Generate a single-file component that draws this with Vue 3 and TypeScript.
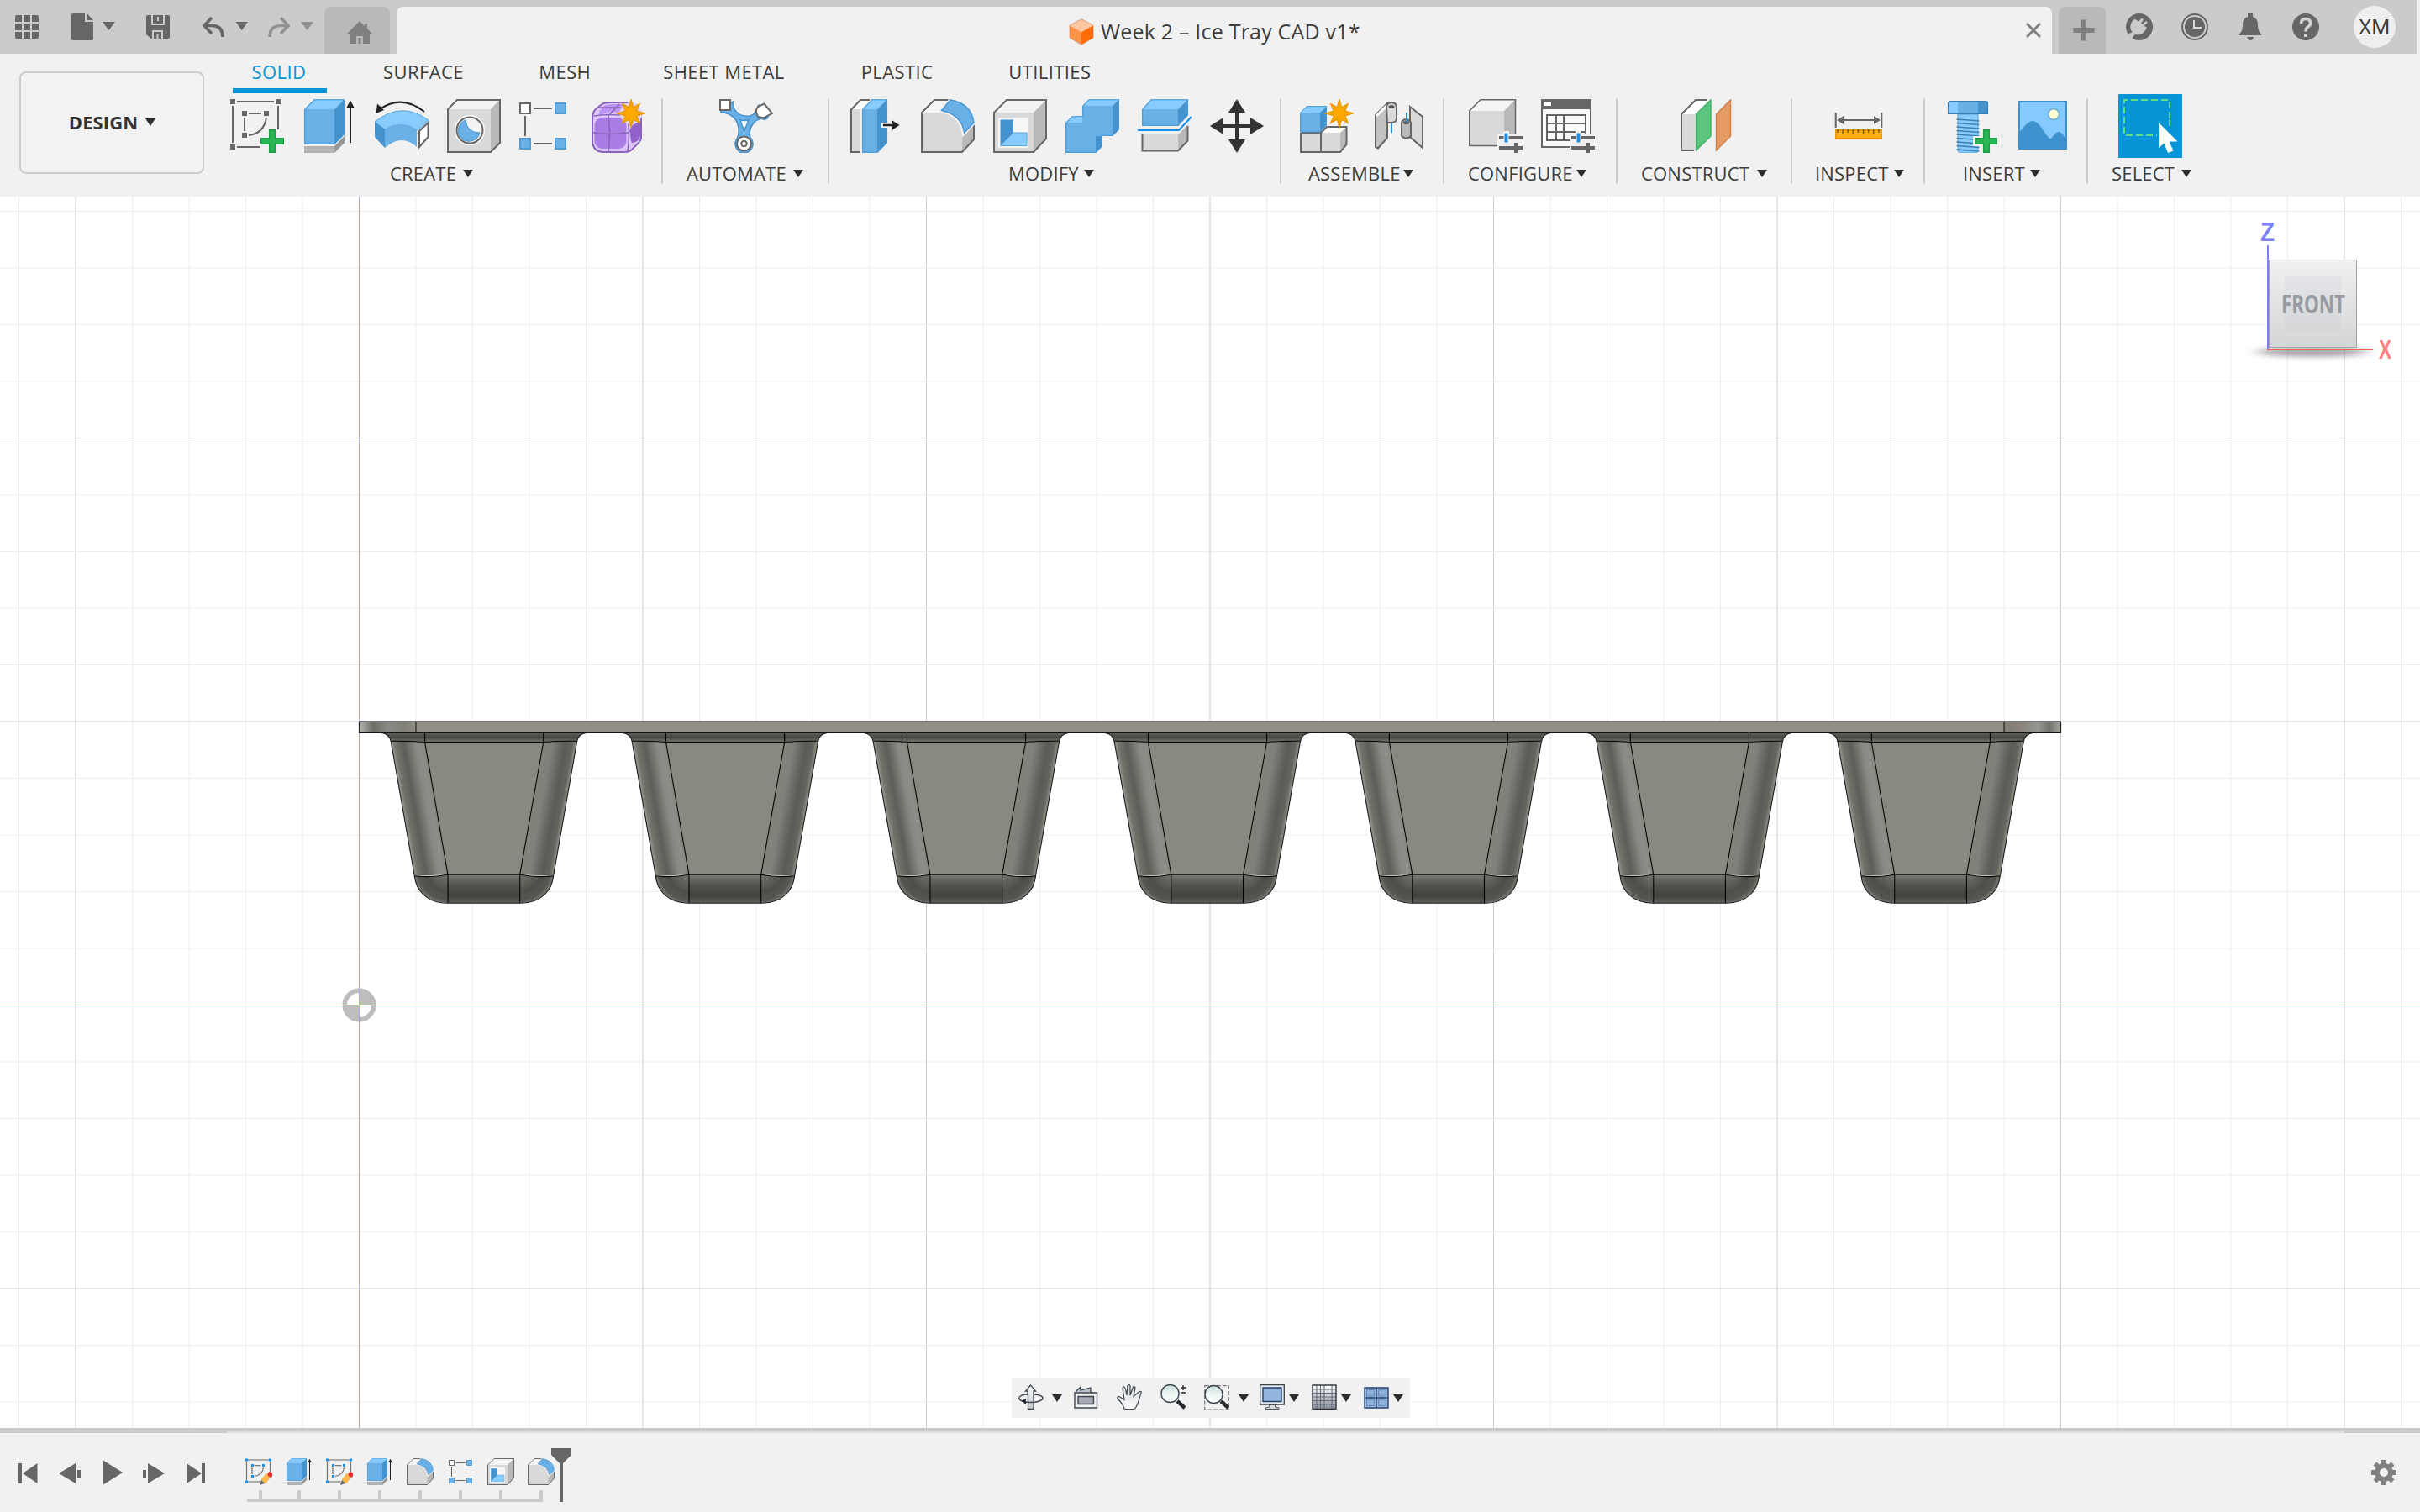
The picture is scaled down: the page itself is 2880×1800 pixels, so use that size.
<script setup lang="ts">
interface ToolGroup {
  label: string
  width: number
  pad: number
  labelX: number
  textWidth: number
  icons: string[]
}

const tabs = [
  { name: 'SOLID', gap: 0 },
  { name: 'SURFACE', gap: 92 },
  { name: 'MESH', gap: 89.5 },
  { name: 'SHEET METAL', gap: 86 },
  { name: 'PLASTIC', gap: 91 },
  { name: 'UTILITIES', gap: 90 },
]

const groups: ToolGroup[] = [
  { label: 'CREATE', width: 533, pad: 1, labelX: 210, textWidth: 87, icons: ['sketch', 'extrude', 'revolve', 'hole', 'pattern', 'form'] },
  { label: 'AUTOMATE', width: 196, pad: 2, labelX: 28, textWidth: 127, icons: ['automate'] },
  { label: 'MODIFY', width: 536, pad: 4, labelX: 213, textWidth: 90, icons: ['press', 'fillet', 'shell', 'combine', 'split', 'move'] },
  { label: 'ASSEMBLE', width: 192, pad: 2, labelX: 32, textWidth: 113, icons: ['component', 'joint'] },
  { label: 'CONFIGURE', width: 204, pad: 3, labelX: 28, textWidth: 129, icons: ['config', 'table'] },
  { label: 'CONSTRUCT', width: 206, pad: 2, labelX: 28, textWidth: 138, icons: ['plane'] },
  { label: 'INSPECT', width: 156, pad: 2, labelX: 27, textWidth: 94, icons: ['measure'] },
  { label: 'INSERT', width: 192, pad: 2, labelX: 45, textWidth: 80, icons: ['bolt', 'picture'] },
]

const navItems = [
  { icon: 'orbit', gap: 8 },
  { icon: 'caret', gap: 10 },
  { icon: 'look', gap: 14 },
  { icon: 'hand', gap: 21 },
  { icon: 'zoom', gap: 22 },
  { icon: 'fit', gap: 22 },
  { icon: 'caret', gap: 11 },
  { icon: 'display', gap: 13 },
  { icon: 'caret', gap: 5 },
  { icon: 'grid', gap: 15 },
  { icon: 'caret', gap: 5 },
  { icon: 'views', gap: 15 },
  { icon: 'caret', gap: 5 },
]

const timeline = ['sketch-edit', 'extrude', 'sketch-edit', 'extrude', 'fillet', 'pattern', 'shell', 'fillet']

const STEP = 67.5
const columns = Array.from({ length: 43 }, (_, i) => i - 6).map((i) => ({ at: 427.5 + i * STEP, major: i % 5 === 0 }))
const rows = Array.from({ length: 22 }, (_, i) => i - 14).map((i) => ({ at: 1196.5 + i * STEP, major: i % 5 === 0 }))
const cups = Array.from({ length: 7 }, (_, i) => i * 286.95)
const rulerTicks = Array.from({ length: 9 }, (_, i) => ({ x: 7 + i * 6.1, h: i % 2 ? 6 : 4 }))
const threads = Array.from({ length: 9 }, (_, i) => 24 + i * 4.5)
const gridSteps = [6, 10.5, 15, 19.5, 24]
</script>

<template>
  <div class="app">
    <svg class="defs" width="0" height="0">
      <defs>
        <linearGradient id="lens" x1="0" y1="0" x2="0" y2="1">
          <stop offset="0" stop-color="#c9dedc" /><stop offset=".5" stop-color="#ecf6f4" /><stop offset="1" stop-color="#fff" />
        </linearGradient>
        <linearGradient id="metal" x1="0" y1="0" x2="0" y2="1">
          <stop offset="0" stop-color="#fff" /><stop offset="1" stop-color="#c5c8d0" />
        </linearGradient>
        <linearGradient id="palm" x1="0" y1="0" x2="0" y2="1">
          <stop offset="0" stop-color="#d4d7dc" /><stop offset="1" stop-color="#fff" />
        </linearGradient>
        <linearGradient id="mesh" x1="0" y1="0" x2="0" y2="1">
          <stop offset="0" stop-color="#fff" /><stop offset="1" stop-color="#878c99" />
        </linearGradient>

        <g id="burst">
          <polygon points="0,-16 2.6,-7 10,-11 6.6,-2.8 16,0 6.6,2.8 10,11 2.6,7 0,16 -2.6,7 -10,11 -6.6,2.8 -16,0 -6.6,-2.8 -10,-11 -2.6,-7" fill="#ffa900" stroke="#e89a00" stroke-width="1.5" />
        </g>
        <g id="plus">
          <path d="M46 36h8v10h10v8h-10v10h-8v-10h-10v-8h10z" fill="none" stroke="#f1f1f1" stroke-width="4" />
          <path d="M46.7 36.7h6.6v10h10v6.6h-10v10h-6.6v-10h-10v-6.6h10z" fill="#29b556" stroke="#1a9f42" stroke-width="1.5" />
        </g>
        <g id="sliders">
          <path d="M34 42h7v-4h7v4h18v22h-6v2h-9v-2h-17z" fill="#f1f1f1" />
          <path d="M36 44h28v4h-28zM36 56h28v4h-28zM54 52h4v12h-4z" fill="#666" />
          <path d="M42 40h5v12h-5z" fill="#1790ec" stroke="#f1f1f1" stroke-width="1" />
        </g>

        <symbol id="i-sketch" viewBox="0 0 64 64">
          <path d="M8 3h44M3 8v44M57 8v28M8 57h28M22 17h15M17 22v16M43 22Q40 41 22 43" fill="none" stroke="#666" stroke-width="2" />
          <path d="M0 0h6v6H0zM54 0h6v6h-6zM0 54h6v6H0zM14 14h6v6h-6zM40 14h6v6h-6zM14 40h6v6h-6z" fill="#666" />
          <use href="#plus" />
        </symbol>
        <symbol id="i-sketch-edit" viewBox="0 0 64 64">
          <path d="M5 4h54M5 56h30" stroke="#aaa" stroke-width="4" /><path d="M3 8v44M59 8v28M21 17h16M16 22v16M43 22Q41 40 21 43" fill="none" stroke="#777" stroke-width="2.5" />
          <path d="M0 1h6v6H0zM56 1h6v6h-6zM0 53h6v6H0zM14 14h6v6h-6zM40 14h6v6h-6zM14 40h6v6h-6z" fill="#1790ec" />
          <path d="M34 64l4-13 8 9z" fill="#666" /><path d="M38 52l12-16 10 8-12 16z" fill="#fcbb4b" stroke="#d99a30" /><path d="M54 35l3-3 7 3v8l-4 3-7-5z" fill="#f03030" />
        </symbol>
        <symbol id="i-extrude" viewBox="0 0 64 64">
          <path d="M2 56h36v8H2z" fill="#b2b2b2" /><path d="M38 56l12-12v8L38 64z" fill="#979797" />
          <path d="M2 12h36v42H2z" fill="#69b0e6" /><path d="M2 12L14 0h36L38 12z" fill="#87cbff" /><path d="M38 12L50 0v42L38 54z" fill="#4492ce" />
          <path d="M2.7 53.3V12.3L14.3.7h35v41L38 53.3z" fill="none" stroke="#4a98d2" stroke-opacity=".7" stroke-width="1.5" />
          <path d="M57 8v44" stroke="#222" stroke-width="2" /><path d="M52.500 10L57 1.500 61.500 10z" fill="#222" />
        </symbol>
        <symbol id="i-revolve" viewBox="0 0 64 64">
          <path d="M0 27Q32 1.500 64 25L51 37Q32 24 12 36z" fill="#87cbff" stroke="#5ca6dc" />
          <path d="M12 36Q32 24 50 36V57Q32 40.500 12 58z" fill="#69b0e6" /><path d="M0 27L12 36V58L0 45z" fill="#4492ce" />
          <path d="M53 38L63.500 28V45L53 57z" fill="#fff" stroke="#666" stroke-width="2" />
          <path d="M59 15Q32 -6 6 12" fill="none" stroke="#222" stroke-width="2.200" /><path d="M1.500 17L3 5.500 11 13z" fill="#222" />
        </symbol>
        <symbol id="i-hole" viewBox="0 0 64 64">
          <path d="M1 12L12 1H63V52L52 63H1z" fill="#d9d9d9" /><path d="M1 12L12 1H63L52 12z" fill="#f3f3f3" /><path d="M52 12L63 1V52L52 63z" fill="#b9b9b9" />
          <path d="M1 12L12 1H63V52L52 63H1z" fill="none" stroke="#666" stroke-width="2" />
          <circle cx="27" cy="37" r="18" fill="#fff" /><circle cx="27" cy="37" r="15.500" fill="#f3f3f3" stroke="#666" stroke-width="2" />
          <path d="M22 25A13 13 0 1 0 39 40Q24 40 22 25z" fill="#69b0e6" stroke="#4a98d2" />
        </symbol>
        <symbol id="i-pattern" viewBox="0 0 64 64">
          <path d="M1 5h12v12H1z" fill="#fff" stroke="#666" stroke-width="2" />
          <path d="M43 5h12v12H43zM1 47h12v12H1zM43 47h12v12H43z" fill="#69b0e6" stroke="#549dd4" stroke-width="2" />
          <path d="M17 11h22M7 20v24M17 53h22" stroke="#666" stroke-width="2" />
        </symbol>
        <symbol id="i-form" viewBox="0 0 64 64">
          <path d="M1 23Q1 15 6 11L11 7Q15 4 22 4H42Q57 8 59 24V46Q59 49 56 52L47 61Q44 63 39 63H13Q1 62 1 49z" fill="#dcc8f8" stroke="#8a63bb" stroke-width="2" />
          <path d="M9 15L15 8Q18 6 24 6H40L32 16Q20 14 9 20z" fill="#bd94f8" />
          <rect x="3.500" y="22" width="38" height="37" rx="9" fill="#a97de4" /><path d="M46 36Q47 30 58 27V45Q55 52 48 52Q46 50 46 36z" fill="#9360cc" />
          <path d="M2 40Q20 43 43 40L59 29M20 63Q23 38 20 20L33 6M3 20Q22 17 41 20M43 62Q46 40 43 22M9 10H34" fill="none" stroke="#8a63bb" stroke-width="1.600" />
          <circle cx="47" cy="17" r="13" fill="#e4d6f8" /><use href="#burst" x="47" y="17" />
        </symbol>
        <symbol id="i-automate" viewBox="0 0 64 64">
          <path d="M2 14L16 3C16 16 26 21 36 20C44 19 44 11 47 7L58 22Q54 26 50 23Q38 26 36 40Q36 45 39 49A10.500 10.500 0 1 1 20 49Q24 43 23 35C22 24 14 16 2 16z" fill="#69b0e6" stroke="#4492ce" stroke-width="1.500" />
          <path d="M1 1h12v12H1zM53.500 5.500L63 17 53 22.500 46 21Q42 14 46 9z" fill="#fff" stroke="#666" stroke-width="2" />
          <path d="M25 25Q31 26 35 25L29.500 38z" fill="#fff" stroke="#4492ce" stroke-width="1.500" />
          <circle cx="29.500" cy="53" r="8.500" fill="#fff" stroke="#666" stroke-width="2" /><circle cx="29.500" cy="53" r="3.200" fill="#fff" stroke="#666" stroke-width="2" />
        </symbol>
        <symbol id="i-press" viewBox="0 0 64 64">
          <path d="M3 12.500L14 1H25L14 12V63H3z" fill="#fff" /><path d="M3 12h11v51H3z" fill="#dadada" /><path d="M25 1H14L3 12.500V63H14" fill="none" stroke="#666" stroke-width="2" />
          <path d="M16 12h18v52H16z" fill="#69b0e6" /><path d="M16 12L28 0H46L34 12z" fill="#87cbff" /><path d="M34 12L46 0V52L34 64z" fill="#4492ce" />
          <path d="M16.700 63.300V12.300L28.300.7H45.300V52L34 63.300z" fill="none" stroke="#4a98d2" stroke-opacity=".7" stroke-width="1.500" />
          <path d="M39 31H56" stroke="#f1f1f1" stroke-width="6" /><path d="M41 31H54" stroke="#222" stroke-width="2.500" /><path d="M52 25.500L60.500 31 52 36.500z" fill="#222" />
        </symbol>
        <symbol id="i-fillet" viewBox="0 0 64 64">
          <path d="M1 16L16 1H35L24 16z" fill="#f5f5f5" /><path d="M48 44L63 30V48L48 63z" fill="#b9b9b9" /><path d="M1 16H24Q48 20 49 46V63H1z" fill="#d9d9d9" />
          <path d="M34 1H16L1 16V63H49L63 48V30" fill="none" stroke="#666" stroke-width="2" />
          <path d="M24 14L35 1Q61 5 63.500 28L51 41Q50 20 24 14z" fill="#69b0e6" stroke="#f1f1f1" stroke-width="4" /><path d="M24.500 13.500L35 1Q60 5 63 28L51.500 40Q49 19 24.500 13.500z" fill="#69b0e6" stroke="#4a98d2" stroke-width="1.500" />
        </symbol>
        <symbol id="i-shell" viewBox="0 0 64 64">
          <path d="M1 16L16 1H63V47L48 63H1z" fill="#d9d9d9" /><path d="M1 16L16 1H63L48 16z" fill="#f3f3f3" /><path d="M48 16L63 1V47L48 63z" fill="#b9b9b9" />
          <path d="M1 16L16 1H63V47L48 63H1z" fill="none" stroke="#666" stroke-width="2" />
          <path d="M6 22h36v36H6z" fill="#f6f6f6" /><path d="M8.500 24.500H24V40L8.500 55.500z" fill="#4492ce" /><path d="M8.500 55.500L24 40H40V55.500z" fill="#87cbff" stroke="#5ca6dc" />
        </symbol>
        <symbol id="i-combine" viewBox="0 0 64 64">
          <path d="M0 28H20V8H56V44H36V64H0z" fill="#69b0e6" /><path d="M0 28L8 20H20V28zM20 8L28 0H64L56 8z" fill="#87cbff" /><path d="M56 8L64 0V36L56 44zM36 44H44V56L36 64z" fill="#4492ce" />
          <path d="M.7 63.300V28.300L8.300 20.700H20.700V8.300L28.300.7H63.300V36L56 43.300H43.300V56L36 63.300z" fill="none" stroke="#4a98d2" stroke-opacity=".7" stroke-width="1.500" />
        </symbol>
        <symbol id="i-split" viewBox="0 0 64 64">
          <path d="M5 12h43v20H5z" fill="#69b0e6" /><path d="M5 12L16 0H60L48 12z" fill="#87cbff" /><path d="M48 12L60 0V19L48 32z" fill="#4492ce" />
          <path d="M5.700 31.300V12.300L16.300.7H59.300V19L48 31.300z" fill="none" stroke="#4a98d2" stroke-opacity=".7" stroke-width="1.500" />
          <path d="M5.500 42H48V61.500H5.500z" fill="#dadada" /><path d="M48 42L59.500 30V49.500L48 61.500z" fill="#b9b9b9" /><path d="M5.500 42V61.500H48L59.500 49.500V32" fill="none" stroke="#666" stroke-width="2" />
          <path d="M0 37H49L64 21" fill="none" stroke="#f1f1f1" stroke-width="6" /><path d="M0 37H49L64 21" fill="none" stroke="#1790ec" stroke-width="2.200" />
        </symbol>
        <symbol id="i-move" viewBox="0 0 64 64">
          <path d="M32 10V54M10 32H54" stroke="#333" stroke-width="4" /><path d="M32 0L42 16H22zM32 64L22 48H42zM0 32L16 22V42zM64 32L48 42V22z" fill="#333" />
        </symbol>
        <symbol id="i-component" viewBox="0 0 64 64">
          <path d="M1 40H48V63H1z" fill="#dadada" /><path d="M25 40L32 33H56L48 40z" fill="#fff" /><path d="M48 40L56 33V54L48 63z" fill="#b9b9b9" />
          <path d="M1 40V63H48L55.500 54V33H32L25 40V63M1 40H25" fill="none" stroke="#666" stroke-width="2" />
          <path d="M0 16h24v23H0z" fill="#69b0e6" /><path d="M0 16L8 8H32L24 16z" fill="#87cbff" /><path d="M24 16L32 8V31L24 39z" fill="#4492ce" /><path d="M.7 39V16.300L8.300 8.700H31.300V31L24 39z" fill="none" stroke="#4a98d2" />
          <circle cx="47" cy="17" r="14" fill="#f1f1f1" /><use href="#burst" x="47" y="17" />
        </symbol>
        <symbol id="i-joint" viewBox="0 0 64 64">
          <path d="M4 19L18 5V46L7 58.500L4 57z" fill="#c2c2c2" stroke="#666" stroke-width="2" /><path d="M5 20L18 7" stroke="#fff" stroke-width="3" />
          <path d="M17 9Q18 4 24 4Q29 5 29 10V24Q28 28 23 28H18z" fill="#dadada" stroke="#666" stroke-width="2" /><ellipse cx="23" cy="9" rx="3.500" ry="2" fill="#555" />
          <path d="M45 9L60 21V58L45 45z" fill="#dadada" stroke="#666" stroke-width="2" />
          <path d="M35 28Q36 24 41 24Q45 25 46 28V44Q43 47 39 46.500Q35 45 35 43z" fill="#b9b9b9" stroke="#666" stroke-width="2" /><ellipse cx="40.500" cy="28" rx="3.500" ry="2" fill="#555" />
          <path d="M23 29V40M41 16V27" stroke="#1790ec" stroke-width="2" />
        </symbol>
        <symbol id="i-config" viewBox="0 0 64 64">
          <path d="M.7 14L14 .7H55.500V43L42 55.500H.7z" fill="#d9d9d9" /><path d="M.7 14L14 .7H55.500L42 14z" fill="#f5f5f5" /><path d="M42 14L55.500.7V43L42 55.500z" fill="#b9b9b9" />
          <path d="M.7 14L14 .7H55.500V43L42 55.500H.7z" fill="none" stroke="#666" stroke-width="1.500" /><use href="#sliders" />
        </symbol>
        <symbol id="i-table" viewBox="0 0 64 64">
          <path d="M1 1H59V57H1z" fill="#fafafa" stroke="#666" stroke-width="2" /><path d="M0 0H60V12H0z" fill="#666" /><path d="M4 4h8v4H4z" fill="#fff" />
          <path d="M7 19H53V49H7zM18 19V49M27 19V49M7 29H53M7 39H53" fill="none" stroke="#666" stroke-width="2" /><use href="#sliders" />
        </symbol>
        <symbol id="i-plane" viewBox="0 0 64 64">
          <path d="M4 18L21 1H36L20 18z" fill="#fff" /><path d="M4 18H20V61H4z" fill="#dadada" /><path d="M35 1H21L4 18V61H19" fill="none" stroke="#666" stroke-width="2" />
          <path d="M21.500 18L39 1V44L21.500 61z" fill="#5ac67f" stroke="#41b56a" stroke-width="1.500" /><path d="M45.500 18L62.500 1V44L45.500 61z" fill="#e69a64" stroke="#cf8149" stroke-width="1.500" />
        </symbol>
        <symbol id="i-measure" viewBox="0 0 64 64">
          <path d="M4.700 16V34M59.300 16V34M10 25H54" stroke="#666" stroke-width="2" /><path d="M6 25L14 20V30zM58 25L50 20V30z" fill="#666" />
          <path d="M5 37H59V47H5z" fill="#ffad0a" stroke="#e89a00" stroke-width="2" />
          <path v-for="t in rulerTicks" :key="t.x" :d="`M${t.x} 36v${t.h}`" stroke="#7d5a10" stroke-width="1.500" />
        </symbol>
        <symbol id="i-bolt" viewBox="0 0 64 64">
          <path d="M17 18H41V62L39 64H19L17 62z" fill="#87cbff" stroke="#5ca0d2" /><path v-for="y in threads" :key="y" :d="`M15.500 ${y}L42.500 ${y + 2}`" stroke="#4080b0" stroke-width="1.700" />
          <path d="M5 5Q6 2 9 2H17V18H5z" fill="#87cbff" /><path d="M17 2H41V18H17z" fill="#69b0e6" /><path d="M41 2H50Q53 3 53 5V18H41z" fill="#4492ce" />
          <path d="M5.700 17.300V5Q6 2.700 9 2.700H50Q52.300 3 52.300 5V17.300z" fill="none" stroke="#3a7fb4" stroke-width="1.500" />
          <use href="#plus" x="1" />
        </symbol>
        <symbol id="i-picture" viewBox="0 0 64 64">
          <path d="M4 3H60V59H4z" fill="#84caff" /><path d="M4 40Q14 26 20 26Q26 26 33 38L39 46Q41 48 43 46Q48 38 52 39Q57 41 60 50V59H4z" fill="#3d92ce" />
          <path d="M4 3H60V59H4z" fill="none" stroke="#3d92ce" stroke-width="2" /><circle cx="45" cy="18" r="6.500" fill="#ffffd4" stroke="#68acd8" stroke-width="1.500" />
        </symbol>

        <symbol id="n-orbit" viewBox="0 0 30 30">
          <path d="M11 12V8H8.500L14.500 1 20.500 8H18V29.500H11.500V12" fill="url(#metal)" stroke="#3d434d" stroke-width="1.300" />
          <path d="M12 12C4 12 .8 14 .8 16.500S6 21.500 14.500 21.500 29 19 29 16.500 25 12.500 18.500 12" fill="none" stroke="#3d434d" stroke-width="1.500" /><path d="M4 20L9 16.500V24z" fill="#222a36" />
        </symbol>
        <symbol id="n-look" viewBox="0 0 30 30">
          <path d="M2 9L8 3V7L20 4V10" fill="#b9c3cb" stroke="#3d434d" stroke-width="1.300" /><path d="M1 10H27.500V28H1z" fill="#f3f4f6" stroke="#3d434d" stroke-width="1.400" /><path d="M5 14.500H23.500V23.500H5z" fill="#a5aab6" stroke="#3d434d" stroke-width="1.400" />
        </symbol>
        <symbol id="n-hand" viewBox="0 0 30 30">
          <path d="M9 29C8 25 4 20 1 17Q0 14.500 3 14.500L9 18.500 7 5Q7 2.500 9 3Q10.500 3.500 12 13L13 1.500Q14.500 -.5 16 1.500V13L19.500 3Q21.500 2 22 4L20 14.500 27 8.500Q30 8 29 10.500C27 15 26 24 21.500 29Q15 30.500 9 29z" fill="url(#palm)" stroke="#3d434d" stroke-width="1.200" />
        </symbol>
        <symbol id="n-zoom" viewBox="0 0 30 30">
          <path d="M20 20L29 28" stroke="#22282f" stroke-width="4.500" /><circle cx="11.500" cy="11" r="10.500" fill="url(#lens)" stroke="#3d4650" stroke-width="1.400" /><path d="M24 4H30M27 1V7M24 10H30" stroke="#222" stroke-width="1.300" />
        </symbol>
        <symbol id="n-fit" viewBox="0 0 30 30">
          <path d="M.7 1.700H29.300V30H.7z" fill="none" stroke="#777" stroke-width="1.200" stroke-dasharray="5 2" /><path d="M20 20L29 28" stroke="#2b2b2b" stroke-width="4.500" /><circle cx="11.500" cy="12" r="10.500" fill="url(#lens)" stroke="#3d4650" stroke-width="1.400" />
        </symbol>
        <symbol id="n-display" viewBox="0 0 30 30">
          <path d="M.7.7H29.300V24H.7z" fill="#e6e8ec" stroke="#3d434d" stroke-width="1.300" /><path d="M4 4H26V20.500H4z" fill="#92b5dd" stroke="#23406d" stroke-width="1.400" /><path d="M11.500 24.500H18.500V27L23 28V29.500H7V28L11.500 27z" fill="#d9dbe0" stroke="#4c525c" />
        </symbol>
        <symbol id="n-grid" viewBox="0 0 30 30">
          <path d="M1 1H29V30H1z" fill="url(#mesh)" /><path v-for="g in gridSteps" :key="g" :d="`M${g} 1V30M1 ${g}H29`" stroke="#5a616b" stroke-width=".9" /><path d="M1 1H29V29.500H1z" fill="none" stroke="#30343a" stroke-width="1.400" />
        </symbol>
        <symbol id="n-views" viewBox="0 0 30 30">
          <path d="M1 4H29V28H1z" fill="#9dbbe0" stroke="#23406d" stroke-width="1.400" /><path d="M3.500 6.500H12.500V14H3.500zM17.500 6.500H26.500V14H17.500zM3.500 18H12.500V25.500H3.500zM17.500 18H26.500V25.500H17.500z" fill="#8db3dc" stroke="#6487b8" /><path d="M15 4V28M1 16H29" stroke="#23406d" stroke-width="1.400" />
        </symbol>
      </defs>
    </svg>

    <header class="titlebar">
      <div class="quick">
        <svg width="386" height="64" viewBox="0 0 386 64">
          <path fill="#666" d="M20 18h6v8h-8v-6q0-2 2-2zM28 18h8v8h-8zM38 18h6q2 0 2 2v6h-8zM18 28h8v8h-8zM28 28h8v8h-8zM38 28h8v8h-8zM18 38h8v8h-6q-2 0-2-2zM28 38h8v8h-8zM38 38h8v6q0 2-2 2h-6z" />
          <path fill="#666" d="M87 16h14v10h10v20q0 2-2 2h-22q-2 0-2-2v-28q0-2 2-2zM103.500 16l7.500 8h-7.500zM122 26h15l-7.500 10zM280.500 26h14.500l-7.200 10z" />
          <path fill="#666" d="M176 18h24q2 0 2 2v24q0 2-2 2h-20l-6-5v-21q0-2 2-2z" />
          <path fill="none" stroke="#cbcbcb" stroke-width="2" d="M181 18v11h14v-11M188 20v5M182 46v-9h11v9M187.500 46v-5" />
          <path fill="none" stroke="#666" stroke-width="3.600" d="M252 21l-9 9.500 9 9.500M243 30.500h9q13 0 13 13.500" />
          <path fill="none" stroke="#929292" stroke-width="3.600" d="M334 21l9 9.500-9 9.500M343 30.500h-9q-13 0-13 13.500" />
          <path fill="#929292" d="M358 26h15l-7.500 10z" />
        </svg>
      </div>
      <div class="tab home">
        <svg width="30" height="28" viewBox="0 0 30 28"><path fill="#808080" d="M15 0l6 6V3h3v6l6 6h-3v12h-8v-9h-8v9H3V15H0zM13.500 20h3v7h-3z" /></svg>
      </div>
      <div class="tab document">
        <div class="doc-title">
          <svg width="30" height="32" viewBox="0 0 30 32"><path fill="#ff9348" d="M1 8l14 8v15L1 23z" /><path fill="#ff6b05" d="M29 8l-14 8v15l14-8z" /><path fill="#ffc7a0" d="M15 .7L29 8 15 16 1 8z" /><path d="M15 .7L29 8v15l-14 8.300L1 23V8z" fill="none" stroke="#b06a3a" stroke-opacity=".5" /></svg>
          <span>Week 2 – Ice Tray CAD v1*</span>
        </div>
        <svg class="close" width="18" height="18" viewBox="0 0 18 18"><path d="M1 1l16 16M17 1L1 17" stroke="#808080" stroke-width="3" /></svg>
      </div>
      <div class="tab add">
        <svg width="26" height="26" viewBox="0 0 26 26"><path d="M13 .5v25M.5 13h25" stroke="#808080" stroke-width="6" /></svg>
      </div>
      <div class="status">
        <svg width="32" height="32" viewBox="0 0 32 32">
          <circle cx="16" cy="16" r="16" fill="#666" />
          <path d="M9 7.500C4 13 5 19 7.500 22.500L2 24.500 7 30 11 24.500C15 26.500 20 25 22.500 21L25 17 21.500 14.500 26 11 24 9 19.500 13 18 11.500 21 7.500 19 5.500 15 9.500 11 7z" fill="#cbcbcb" />
        </svg>
        <svg width="32" height="32" viewBox="0 0 32 32"><circle cx="16" cy="16" r="15" fill="none" stroke="#666" stroke-width="2" /><circle cx="16" cy="16" r="12" fill="#666" /><path d="M15 8v9h9" fill="none" stroke="#d8d8d8" stroke-width="2" /></svg>
        <svg width="32" height="32" viewBox="0 0 32 32"><path fill="#666" d="M13 0h6v4q6 2 6 9 0 9 4 11v2H3v-2q4-2 4-11 0-7 6-9zM12 28h8q-1 4-4 4t-4-4z" /></svg>
        <svg width="32" height="32" viewBox="0 0 32 32"><circle cx="16" cy="16" r="16" fill="#666" /><path d="M10.500 12q0-5.500 5.500-5.500t5.500 5q0 3-3 4.500-2.500 1.500-2.500 5.500" fill="none" stroke="#d2d2d2" stroke-width="3.500" /><path d="M14 24h4v4h-4z" fill="#d2d2d2" /></svg>
        <span class="avatar">XM</span>
      </div>
    </header>

    <section class="ribbon">
      <button class="workspace"><span>DESIGN</span><i class="caret"></i></button>
      <div class="ribbon-main">
        <nav class="tabs">
          <span v-for="(t, i) in tabs" :key="t.name" :class="{ active: i === 0 }" :style="{ marginLeft: t.gap + 'px' }">{{ t.name }}</span>
        </nav>
        <div class="groups">
          <div v-for="g in groups" :key="g.label" class="group" :style="{ width: g.width + 'px' }">
            <div class="icons" :style="{ paddingLeft: g.pad + 'px' }">
              <svg v-for="n in g.icons" :key="n" width="64" height="64"><use :href="'#i-' + n" /></svg>
            </div>
            <div class="label" :style="{ paddingLeft: g.labelX + 'px' }">
              <span :style="{ width: g.textWidth + 'px' }">{{ g.label }}</span><i class="caret"></i>
            </div>
          </div>
          <div class="group select">
            <div class="icons">
              <svg width="76" height="76" viewBox="0 0 76 76">
                <path d="M0 0h76v76H0z" fill="#0696d7" /><path d="M7 7H61V49H7z" fill="none" stroke="#5fdc84" stroke-width="2" stroke-dasharray="8 4" stroke-dashoffset="4" />
                <path d="M46 30H76V76H46z" fill="#0696d7" /><path d="M61 30V42" stroke="#5fdc84" stroke-width="2" stroke-dasharray="8 4" />
                <path d="M48 34V64L54.500 58.500 59 70 65.500 67.500 60.500 56.500H70.500z" fill="#fff" />
              </svg>
            </div>
            <div class="label"><span>SELECT</span><i class="caret"></i></div>
          </div>
        </div>
      </div>
    </section>

    <main class="canvas">
      <svg class="scene" width="2880" height="1466" viewBox="0 234 2880 1466">
        <defs>
          <linearGradient id="cupL" gradientUnits="userSpaceOnUse" x1="465" y1="882" x2="504.400" y2="875.100">
            <stop offset="0" stop-color="#9a9c94" /><stop offset=".12" stop-color="#73736c" /><stop offset=".36" stop-color="#5e5d57" /><stop offset=".7" stop-color="#888982" /><stop offset=".85" stop-color="#8d8e87" /><stop offset="1" stop-color="#84857c" />
          </linearGradient>
          <linearGradient id="cupR" gradientUnits="userSpaceOnUse" x1="647" y1="883" x2="686.400" y2="889.900">
            <stop offset="0" stop-color="#82837a" /><stop offset=".25" stop-color="#7f817a" /><stop offset=".65" stop-color="#5b5a54" /><stop offset=".85" stop-color="#65645e" /><stop offset="1" stop-color="#9a9c94" />
          </linearGradient>
          <linearGradient id="cupTop" x1="0" y1="0" x2="0" y2="1"><stop offset="0" stop-color="#605f58" /><stop offset=".4" stop-color="#4c4a44" /><stop offset="1" stop-color="#74756c" /></linearGradient>
          <linearGradient id="cupBase" x1="0" y1="0" x2="0" y2="1"><stop offset="0" stop-color="#7b7c75" /><stop offset=".35" stop-color="#55544e" /><stop offset=".75" stop-color="#43413b" /><stop offset="1" stop-color="#5f5e58" /></linearGradient>
          <radialGradient id="cornerL" gradientUnits="userSpaceOnUse" cx="533" cy="1036" r="42"><stop offset="0" stop-color="#7b7c75" /><stop offset=".6" stop-color="#504e48" /><stop offset=".85" stop-color="#56554f" /><stop offset="1" stop-color="#85857e" /></radialGradient>
          <radialGradient id="cornerR" gradientUnits="userSpaceOnUse" cx="619" cy="1036" r="42"><stop offset="0" stop-color="#7b7c75" /><stop offset=".6" stop-color="#504e48" /><stop offset=".85" stop-color="#56554f" /><stop offset="1" stop-color="#85857e" /></radialGradient>
          <linearGradient id="rimL" x1="0" y1="0" x2="1" y2="0"><stop offset="0" stop-color="#b4b6af" /><stop offset=".25" stop-color="#6d6d66" /><stop offset=".5" stop-color="#8a8983" /><stop offset=".8" stop-color="#807f78" /><stop offset="1" stop-color="#908d86" /></linearGradient>
          <linearGradient id="rimR" x1="0" y1="0" x2="1" y2="0"><stop offset="0" stop-color="#7f7c76" /><stop offset=".3" stop-color="#8a837c" /><stop offset=".6" stop-color="#959690" /><stop offset=".8" stop-color="#73736d" /><stop offset="1" stop-color="#a5a7a0" /></linearGradient>
          <linearGradient id="cubeFace" x1="0" y1="0" x2="0" y2="1"><stop offset="0" stop-color="#f1f1f1" /><stop offset="1" stop-color="#d5d5d5" /></linearGradient>
          <linearGradient id="cubeInner" x1="0" y1="0" x2="0" y2="1"><stop offset="0" stop-color="#e3e4e7" /><stop offset="1" stop-color="#d4d6d8" /></linearGradient>
          <filter id="soft" x="-30%" y="-150%" width="160%" height="400%"><feGaussianBlur stdDeviation="10 3" /></filter>
          <g id="cup">
            <path d="M452 872.500Q463 873 465.200 882.500L505.600 884H646.700L686.700 882.500Q689 873 699 872.500z" fill="url(#cupTop)" />
            <path d="M505.600 883.500H646.700L618.700 1041.300H533z" fill="#8a897f" />
            <path d="M465.200 882.300L505.600 883.500 533 1041.300 493.300 1043z" fill="url(#cupL)" />
            <path d="M686.700 882.300L646.700 883.500 618.700 1041.300 658.600 1043z" fill="url(#cupR)" />
            <path d="M533 1041.300H618.700V1075H533z" fill="url(#cupBase)" />
            <path d="M493.300 1042.700Q512 1045 533 1041.300V1075C508 1075 494 1058 493.300 1042.700z" fill="url(#cornerL)" />
            <path d="M658.600 1042.700Q640 1045 618.700 1041.300V1075C644 1075 658 1058 658.600 1042.700z" fill="url(#cornerR)" />
            <path d="M465.200 882.300Q485 882 505.600 883.500H646.700Q667 882 686.700 882.300M505.600 872.500V883.500L533 1041.300V1075M646.700 872.500V883.500L618.700 1041.300V1075M493.300 1042.700Q512 1045 533 1041.300H618.700Q640 1045 658.600 1042.700" fill="none" stroke="#000" stroke-width="1.100" />
            <path d="M454 872.500Q463 873.500 465.200 882.300L493.300 1042.700C495 1060 508 1075 532 1075.300H620C644 1075 657 1060 658.600 1042.700L686.700 882.300Q688.500 873.500 698 872.500" fill="none" stroke="#1a1a1a" stroke-width="1.100" />
          </g>
        </defs>
        <path v-for="c in columns" :key="'c' + c.at" :d="`M${c.at} 234V1700`" :class="c.major ? 'major' : 'minor'" />
        <path v-for="r in rows" :key="'r' + r.at" :d="`M0 ${r.at}H2880`" :class="r.major ? 'major' : 'minor'" />
        <circle cx="427.500" cy="1196.500" r="17.300" fill="#fff" stroke="#bdbdbd" stroke-width="5.600" />
        <path d="M427.500 1196.500V1179A17.500 17.500 0 0 1 445 1196.500zM427.500 1196.500V1214A17.500 17.500 0 0 1 410 1196.500z" fill="#bdbdbd" />
        <path d="M0 1196.500H2880" stroke="#ff8080" />
        <path d="M427.500 234V1700" stroke="#a9a9f5" />

        <path d="M427.500 859H495V872.500H427.500z" fill="url(#rimL)" /><path d="M495 859H2385V872.500H495z" fill="#918e87" /><path d="M2385 859H2452.500V872.500H2385z" fill="url(#rimR)" />
        <use v-for="x in cups" :key="x" href="#cup" :x="x" />
        <path d="M427.500 859H2452.500" stroke="#4b4950" stroke-width="1.500" /><path d="M427.500 872.500H2452.500" stroke="#111" /><path d="M427.500 859V873M2452.500 859V873M495 859V873M2385 859V873" stroke="#222" stroke-width="1.200" />

        <ellipse cx="2752" cy="419" rx="66" ry="6" fill="#000" opacity=".34" filter="url(#soft)" />
        <path d="M2700.500 309.500H2804.500V413.500H2700.500z" fill="url(#cubeFace)" stroke="#a3a3a3" />
        <path d="M2719 328H2786V395H2719z" fill="url(#cubeInner)" />
        <path d="M2699 292V417" stroke="#7c7cfc" stroke-width="2" /><path d="M2698 416H2824" stroke="#ee5f62" stroke-width="2" />
        <text x="2715" y="373" class="cube" textLength="76" lengthAdjust="spacingAndGlyphs" fill="#969aa1">FRONT</text>
        <text x="2690" y="287" class="axis" textLength="17" lengthAdjust="spacingAndGlyphs" fill="#8080ff">Z</text>
        <text x="2831" y="427" class="axis" textLength="15" lengthAdjust="spacingAndGlyphs" fill="#ff8080">X</text>
      </svg>

      <div class="navbar">
        <template v-for="(n, i) in navItems" :key="i">
          <i v-if="n.icon === 'caret'" class="caret" :style="{ marginLeft: n.gap + 'px' }"></i>
          <svg v-else width="30" height="30" :style="{ marginLeft: n.gap + 'px' }"><use :href="'#n-' + n.icon" /></svg>
        </template>
      </div>
    </main>

    <footer class="timeline">
      <div class="edge"></div>
      <div class="timeline-row">
        <svg class="playback" width="292" height="94" viewBox="0 1706 292 94">
          <path fill="#666" d="M22 1742h4v24h-4zM44.500 1742v24l-17.500-12zM90 1742v24l-20-12zM92 1750h4v10h-4zM122 1738l24 15-24 15zM170 1750h4v10h-4zM176 1742l20 12-20 12zM222 1742l18 12-18 12zM240 1742h4v24h-4z" />
        </svg>
        <div class="track">
          <div v-for="(n, i) in timeline" :key="i" class="step">
            <svg width="32" height="32" :class="n"><use :href="'#i-' + n" /></svg>
            <b></b>
          </div>
          <svg class="marker" width="24" height="64" viewBox="0 0 24 64"><path fill="#666" d="M0 0h24v8l-10 10v46h-4V18L0 8z" /></svg>
        </div>
        <svg class="gear" width="30" height="30" viewBox="-15 -15 30 30">
          <circle r="8" fill="none" stroke="#808080" stroke-width="6" />
          <path d="M0-15v6M0 9v6M-15 0h6M9 0h6" stroke="#808080" stroke-width="6" /><path d="M-10.500-10.500l4 4M10.500-10.500l-4 4M-10.500 10.500l4-4M10.500 10.500l-4-4" stroke="#808080" stroke-width="5.500" />
        </svg>
      </div>
    </footer>
  </div>
</template>

<style>
body {
  margin: 0;
  background: #f1f1f1;
}
</style>

<style scoped>
.app {
  width: 2880px;
  height: 1800px;
  overflow: hidden;
  display: flex;
  flex-direction: column;
  background: #f1f1f1;
  color: #3c3c3c;
  font-family: 'Open Sans', 'Noto Sans', sans-serif;
}
svg {
  display: block;
  flex: none;
}
.defs {
  position: absolute;
}
.titlebar {
  box-sizing: border-box;
  width: 2876px;
  height: 64px;
  flex: none;
  display: flex;
  align-items: flex-end;
  background: #cbcbcb;
}
.tab {
  box-sizing: border-box;
  height: 56px;
  border-radius: 8px 8px 0 0;
  display: flex;
  background: #b9b9b9;
}
.home {
  width: 78px;
  padding: 17px 0 0 27px;
}
.document {
  width: 1970px;
  margin-left: 8px;
  background: #f1f1f1;
  justify-content: space-between;
}
.doc-title {
  display: flex;
  padding: 14px 0 0 800px;
  gap: 8px;
  font-size: 25px;
  line-height: 30px;
  letter-spacing: 0.2px;
}
.doc-title span {
  white-space: nowrap;
}
.close {
  margin: 19px 13px 0 0;
}
.add {
  width: 56px;
  margin-left: 8px;
  padding: 15px 0 0 17px;
}
.status {
  height: 64px;
  display: flex;
  align-items: center;
  gap: 34px;
  margin-left: 24px;
}
.avatar {
  width: 50px;
  height: 50px;
  margin-left: 7px;
  border-radius: 50%;
  background: #eee;
  color: #333;
  font-size: 25px;
  line-height: 48px;
  text-align: center;
}
.ribbon {
  height: 170px;
  flex: none;
  display: flex;
}
.workspace {
  box-sizing: border-box;
  width: 220px;
  height: 122px;
  margin: 21px 11px 0 23px;
  padding: 0 0 2px 1px;
  border: 2px solid #ccc;
  border-radius: 8px;
  background: #f2f2f2;
  display: flex;
  align-items: center;
  justify-content: center;
  gap: 9px;
  font: 700 22px 'Open Sans', sans-serif;
  letter-spacing: 0.1px;
  color: #333;
}
.caret {
  width: 0;
  height: 0;
  border: 6px solid transparent;
  border-top: 9px solid #2d2d2d;
  border-bottom: 0;
}
.tabs {
  display: flex;
  height: 47px;
  padding-left: 23px;
  font-size: 22px;
  line-height: 43px;
  letter-spacing: 0.4px;
  white-space: nowrap;
}
.tabs span.active {
  color: #0696d7;
  box-sizing: border-box;
  width: 112px;
  height: 47px;
  margin-right: -25px;
  padding-right: 2px;
  text-align: center;
  border-bottom: 6px solid #0696d7;
}
.groups {
  display: flex;
}
.group {
  box-sizing: content-box;
  height: 102px;
  margin-top: 6px;
  border-right: 2px solid #ccc;
}
.group:not(.select) {
  margin-right: -2px;
}
.group + .group {
  padding-left: 2px;
  margin-right: -2px;
}
.icons {
  height: 64px;
  margin-top: 1px;
  display: flex;
  justify-content: center;
  align-items: center;
  gap: 22px;
}
.label {
  display: flex;
  align-items: center;
  margin-top: 10px;
  font-size: 22px;
  line-height: 28px;
  letter-spacing: 0.2px;
  white-space: nowrap;
}
.select {
  width: 148px;
  border: 0;
}
.select .label {
  padding-left: 28px;
}
.select .label span {
  width: 83px;
}
.canvas {
  position: relative;
  height: 1466px;
  flex: none;
  background: #fff;
}
.major {
  stroke: #cdcdcd;
}
.minor {
  stroke: #ededed;
}
.cube {
  font: 700 31px 'Open Sans', sans-serif;
}
.axis {
  font: 700 31px 'Liberation Sans', sans-serif;
}
.navbar {
  box-sizing: border-box;
  position: absolute;
  left: 1204px;
  top: 1406px;
  width: 474px;
  height: 48px;
  padding-bottom: 2px;
  display: flex;
  align-items: center;
  background: #f1f1f1;
}
.navbar .caret {
  margin-top: 2px;
}
.timeline {
  height: 100px;
  flex: none;
}
.edge {
  height: 2px;
  border-top: 4px solid #cacaca;
  background: linear-gradient(90deg, #cacaca 270px, #dedede 270px 2790px, #cacaca 2790px);
}
.timeline-row {
  height: 94px;
  display: flex;
}
.track {
  position: relative;
  display: flex;
  gap: 16px;
  height: 48px;
  padding-top: 30px;
}
.track::after {
  content: '';
  position: absolute;
  left: 2px;
  top: 78px;
  width: 352px;
  height: 4px;
  background: #cacaca;
}
.step {
  width: 32px;
}
.step .pattern {
  margin-left: 2px;
}
.step b {
  display: block;
  width: 4px;
  height: 10px;
  margin: 6px 0 0 14px;
  background: #cacaca;
}
.step:first-child b {
  margin-left: 16px;
}
.marker {
  position: absolute;
  left: 364px;
  top: 18px;
}
.gear {
  margin: 32px 28px 0 auto;
}
</style>
